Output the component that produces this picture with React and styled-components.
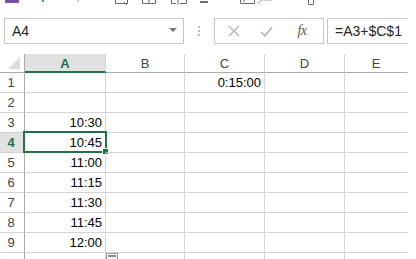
import React from "react";
import styled, { createGlobalStyle } from "styled-components";

const Global = createGlobalStyle`
  html, body { margin: 0; padding: 0; background: #fff; }
  body { font-family: "Liberation Sans", Arial, sans-serif; overflow: hidden; }
`;

const Page = styled.div`
  width: 416px;
  height: 259px;
  overflow: hidden;
  position: relative;
  background: #fff;
`;

const TopStrip = styled.div`
  height: 18px;
  svg { display: block; }
`;

const FormulaBar = styled.div`
  display: flex;
  align-items: stretch;
  height: 26px;
  padding-left: 4px;
`;

const NameBox = styled.div`
  box-sizing: border-box;
  width: 180px;
  border: 1px solid #c6c6c6;
  display: flex;
  align-items: center;
  justify-content: space-between;
  padding: 0 6px 0 7px;
  font-size: 14px;
  color: #262626;
`;

const Caret = styled.span`
  width: 0;
  height: 0;
  border-left: 4px solid transparent;
  border-right: 4px solid transparent;
  border-top: 4px solid #777;
  margin-top: -2px;
`;

const Grip = styled.div`
  width: 30px;
  display: flex;
  flex-direction: column;
  align-items: center;
  justify-content: center;
  gap: 2px;
  span { width: 2px; height: 2px; background: #b9b9b9; }
`;

const Buttons = styled.div`
  box-sizing: border-box;
  width: 110px;
  border: 1px solid #c6c6c6;
  display: flex;
  align-items: center;
  padding-left: 12px;
  gap: 0;
`;

const IconBtn = styled.div`
  width: ${p => p.$w}px;
  display: flex;
  justify-content: center;
  align-items: center;
  color: #b3b3b3;
`;

const Fx = styled.span`
  font-family: "Liberation Serif", "Times New Roman", serif;
  font-style: italic;
  font-size: 14px;
  color: #555;
  letter-spacing: -0.5px;
`;

const FormulaInput = styled.div`
  box-sizing: border-box;
  margin-left: 3px;
  width: 81px;
  border: 1px solid #c6c6c6;
  border-right: none;
  display: flex;
  align-items: center;
  padding-left: 7px;
  font-size: 14px;
  color: #262626;
`;

const Sheet = styled.div`
  margin-top: 10px;
  position: relative;
  display: grid;
  grid-template-columns: 25px 81px 79px 80px 80px 63px;
  grid-template-rows: 19px repeat(9, 20px) 20px;
`;

const Corner = styled.div`
  box-sizing: border-box;
  border-right: 1px solid #ababab;
  border-bottom: 1px solid #ababab;
  position: relative;
  &::after {
    content: "";
    position: absolute;
    left: 8px;
    top: 3px;
    width: 0;
    height: 0;
    border-left: 12px solid transparent;
    border-bottom: 12px solid #dcdcdc;
  }
`;

const ColHead = styled.div`
  box-sizing: border-box;
  display: flex;
  align-items: center;
  justify-content: center;
  font-size: 13px;
  padding-top: 1px;
  background: ${p => (p.$active ? "#e1e1e1" : "#fff")};
  color: ${p => (p.$active ? "#217346" : "#444")};
  font-weight: ${p => (p.$active ? "bold" : "normal")};
  border-right: 1px solid ${p => (p.$last ? "transparent" : "#d4d4d4")};
  border-bottom: ${p => (p.$active ? "2px solid #217346" : "1px solid #ababab")};
`;

const RowHead = styled.div`
  box-sizing: border-box;
  display: flex;
  align-items: flex-end;
  justify-content: center;
  padding-bottom: 2px;
  padding-right: 2px;
  font-size: 13px;
  background: ${p => (p.$active ? "#e1e1e1" : "#fff")};
  color: ${p => (p.$active ? "#217346" : "#444")};
  font-weight: ${p => (p.$active ? "bold" : "normal")};
  border-right: 1px solid #ababab;
  border-bottom: 1px solid #d4d4d4;
`;

const Cell = styled.div`
  box-sizing: border-box;
  position: relative;
  display: flex;
  align-items: flex-end;
  justify-content: flex-end;
  padding: 0 3px 2px 0;
  font-size: 13px;
  color: #000;
  border-right: 1px solid ${p => (p.$last ? "transparent" : "#d4d4d4")};
  border-bottom: 1px solid #d4d4d4;
`;

const Selection = styled.div`
  position: absolute;
  left: -2px;
  top: -2px;
  right: -2px;
  bottom: -1px;
  border: 2px solid #217346;
  pointer-events: none;
`;

const Handle = styled.div`
  position: absolute;
  right: -4px;
  bottom: -4px;
  width: 5px;
  height: 5px;
  background: #217346;
  border: 1px solid #fff;
`;

const FillBtn = styled.div`
  position: absolute;
  left: 106px;
  top: 199px;
  width: 10px;
  height: 10px;
  border: 1px solid #9a9a9a;
  background: #fff;
  &::after {
    content: "";
    position: absolute;
    left: 1px;
    top: 1px;
    width: 8px;
    height: 2px;
    background: #8a8a8a;
  }
`;

const cols = ["A", "B", "C", "D", "E"];
const data = {
  1: { C: "0:15:00" },
  3: { A: "10:30" },
  4: { A: "10:45" },
  5: { A: "11:00" },
  6: { A: "11:15" },
  7: { A: "11:30" },
  8: { A: "11:45" },
  9: { A: "12:00" },
};

function ToolbarFragments() {
  return (
    <svg width="416" height="6" viewBox="0 0 416 6">
      <rect x="5" y="0" width="14" height="3" fill="#7b4fa8" />
      <rect x="42" y="0" width="2" height="2" fill="#4f8fd8" />
      <rect x="77" y="0" width="2" height="2" fill="#c8c8c8" />
      <path d="M115.5 0 V3.5 H127.5 V0" fill="none" stroke="#6b6b6b" />
      <path d="M124 2 l3 3" stroke="#6b6b6b" />
      <path d="M142.5 0 V3.5 H155.5 V0 M149 0 V3.5" fill="none" stroke="#6b6b6b" />
      <path d="M171.5 0 V3.5 H176 M180 3.5 H186.5 V0 M178 0 V5" fill="none" stroke="#6b6b6b" />
      <rect x="200" y="1" width="8" height="2" fill="#6b6b6b" />
      <path d="M240.5 0 V3.5 H254.5 V0 M244 0 v2" fill="none" stroke="#6b6b6b" />
      <path d="M258 3 l4 -3 M263 0 h9" stroke="#9a9a9a" />
      <path d="M308.5 0 V4.5 H313.5 V0" fill="none" stroke="#6b6b6b" />
    </svg>
  );
}

export default function App() {
  const rows = [];
  for (let r = 1; r <= 10; r++) {
    rows.push(
      <RowHead key={"h" + r} $active={r === 4}>
        {r <= 9 ? r : ""}
      </RowHead>
    );
    cols.forEach((c, i) => {
      const sel = r === 4 && c === "A";
      rows.push(
        <Cell key={c + r} $last={i === cols.length - 1}>
          {data[r] && data[r][c]}
          {sel && (
            <Selection>
              <Handle />
            </Selection>
          )}
        </Cell>
      );
    });
  }
  return (
    <Page>
      <Global />
      <TopStrip>
        <ToolbarFragments />
      </TopStrip>
      <FormulaBar>
        <NameBox>
          A4
          <Caret />
        </NameBox>
        <Grip>
          <span />
          <span />
          <span />
        </Grip>
        <Buttons>
          <IconBtn $w={14}>
            <svg width="12" height="12" viewBox="0 0 12 12">
              <path d="M1 1 L11 11 M11 1 L1 11" stroke="#b3b3b3" strokeWidth="1.3" />
            </svg>
          </IconBtn>
          <IconBtn $w={50}>
            <svg width="13" height="11" viewBox="0 0 13 11">
              <path d="M1 6 L5 10 L12 1" fill="none" stroke="#b3b3b3" strokeWidth="1.6" />
            </svg>
          </IconBtn>
          <IconBtn $w={22}>
            <Fx>fx</Fx>
          </IconBtn>
        </Buttons>
        <FormulaInput>=A3+$C$1</FormulaInput>
      </FormulaBar>
      <Sheet>
        <Corner />
        {cols.map((c, i) => (
          <ColHead key={c} $active={c === "A"} $last={i === cols.length - 1}>
            {c}
          </ColHead>
        ))}
        {rows}
        <FillBtn />
      </Sheet>
    </Page>
  );
}
